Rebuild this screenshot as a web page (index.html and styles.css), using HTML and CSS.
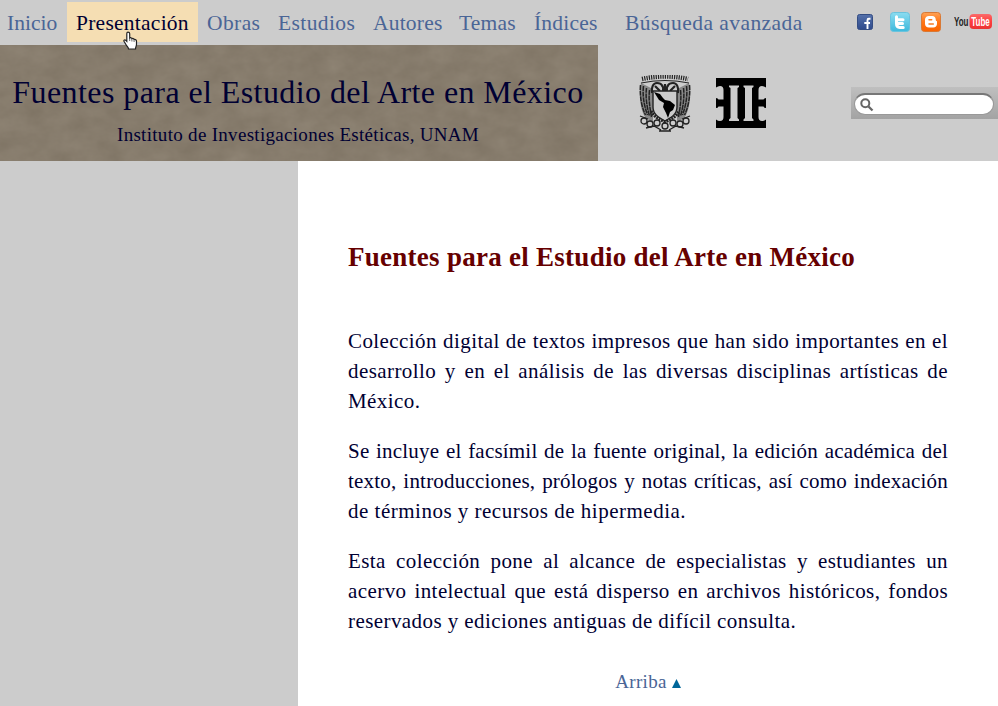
FILE: index.html
```html
<!DOCTYPE html>
<html lang="es">
<head>
<meta charset="utf-8">
<title>Fuentes para el Estudio del Arte en México</title>
<link rel="stylesheet" href="styles.css">
</head>
<body>
<header class="top">
  <div class="bar">
    <nav class="nav">
      <a class="n-ini"><span>Inicio</span></a>
      <a class="n-pre active"><span>Presentación</span>
        <svg class="cursor" width="16" height="20" viewBox="0 0 16 20"><path d="M5 1.200c1.300 0 1.700.8 1.700 1.600v4.200c.8-.6 1.900-.3 2.200.6.900-.4 1.900 0 2.200.9 1.200-.4 2.400.2 2.400 1.700v3.300c0 1.700-1 2.500-1 4.500H5.500c0-1.500-1.500-2.500-2.300-4L1 10.300c-.5-1.200.9-2 1.800-1l1 1V2.800C3.800 2 4.100 1.200 5 1.200z" fill="#fff" stroke="#222" stroke-width="1.200"/><path d="M6.700 7v3M8.900 8v2.500M11.100 8.500v2.500" stroke="#444" stroke-width=".8"/></svg>
      </a>
      <a class="n-obr"><span>Obras</span></a>
      <a class="n-est"><span>Estudios</span></a>
      <a class="n-aut"><span>Autores</span></a>
      <a class="n-tem"><span>Temas</span></a>
      <a class="n-ind"><span>Índices</span></a>
      <a class="n-bus"><span>Búsqueda avanzada</span></a>
    </nav>
    <div class="social">
      <svg class="fb" width="16" height="16" viewBox="0 0 16 16"><defs><linearGradient id="gf" x2="0" y2="1"><stop offset="0" stop-color="#5571aa"/><stop offset="1" stop-color="#2f4b8c"/></linearGradient></defs><rect x=".5" y=".5" width="15" height="15" rx="2" fill="url(#gf)" stroke="#344d83"/><path d="M13.500 4.800h-1.700c-1 0-1.300.5-1.300 1.400V15M7.300 9h5.700" stroke="#fff" stroke-width="1.900" fill="none"/></svg>
      <svg class="tw" width="20" height="20" viewBox="0 0 20 20"><defs><linearGradient id="gt" x2="0" y2="1"><stop offset="0" stop-color="#8bdcf0"/><stop offset="1" stop-color="#3db9dc"/></linearGradient></defs><rect x=".5" y=".5" width="19" height="19" rx="3" fill="url(#gt)" stroke="#69c3dd"/><path d="M6.500 4.800v7c0 2.400 1.200 3.600 3.300 3.600h3.400M6.500 7.700h6.500M7 11.500h5.500" stroke="#fff" stroke-width="3" stroke-linecap="round" stroke-linejoin="round" fill="none"/></svg>
      <svg class="bl" width="20" height="20" viewBox="0 0 20 20"><defs><linearGradient id="gb" x2="0" y2="1"><stop offset="0" stop-color="#ffa255"/><stop offset=".5" stop-color="#ff7415"/><stop offset="1" stop-color="#f96300"/></linearGradient></defs><rect x=".5" y=".5" width="19" height="19" rx="3" fill="url(#gb)" stroke="#d87935"/><path d="M8 4h3.300c2 0 3.400 1.300 3.400 3.300 0 1.300.4 1.700 1.300 2v2.500c0 2.300-1.500 3.700-3.700 3.700H8c-2.500 0-4-1.500-4-3.700V7.800C4 5.500 5.500 4 8 4z" fill="#fff"/><path d="M8 7.700h2.700M8 12h4.300" stroke="#f77a22" stroke-width="1.500" stroke-linecap="round"/></svg>
      <svg class="yt" width="38" height="16" viewBox="0 0 38 16"><defs><linearGradient id="gy" x2="0" y2="1"><stop offset="0" stop-color="#fa6b6b"/><stop offset=".5" stop-color="#ff3d3d"/><stop offset="1" stop-color="#e93434"/></linearGradient></defs><rect x="15.500" y="0" width="22.500" height="15" rx="4" fill="url(#gy)"/><g transform="scale(1 1.600)"><text x="0" y="7.700" class="yt-text yt-you">You</text><text x="17.300" y="7.700" class="yt-text yt-tube">Tube</text></g></svg>
    </div>
  </div>
  <div class="mast">
    <div class="banner">
      <svg class="texture" width="598" height="116"><filter id="paper" x="0" y="0" width="100%" height="100%" color-interpolation-filters="sRGB"><feTurbulence type="fractalNoise" baseFrequency=".04 .055" numOctaves="5" seed="8"/><feColorMatrix values=".07 0 0 0 .493  .07 0 0 0 .451  .07 0 0 0 .39  0 0 0 0 1"/></filter><rect width="598" height="116" filter="url(#paper)"/></svg>
      <h1><span>Fuentes para el Estudio del Arte en México</span></h1>
      <h2><span>Instituto de Investigaciones Estéticas, UNAM</span></h2>
    </div>
    <svg class="seal" width="52" height="58" viewBox="0 0 52 58" fill="none" stroke="#222">
      <path d="M2 8C0 20 1 34 6 42l8 6V14zM50 8c2 12 1 26-4 34l-8 6V14z" fill="#888" stroke="none"/>
      <path d="M3 4Q26-1 49 4" stroke-width="4.500" stroke-dasharray="1.200 1.100"/>
      <path d="M2 8Q26 3 50 8" stroke-width="1"/>
      <path d="M13 18c-1-5 1-10 5-10 5 0 7 4 6 8M39 18c1-5-1-10-5-10-5 0-7 4-6 8M16 11l5 5M36 11l-5 5M26 9v8M22 9l3 5M30 9l-3 5" stroke-width="2.200"/>
      <path d="M1.500 10c-1 10 1 22 5 30M4.500 11c-1 8 0 18 4 29M7.500 13c-1 8 0 18 3 28M10.500 15c-1 8 0 16 2 27M50.500 10c1 10-1 22-5 30M47.500 11c1 8 0 18-4 29M44.500 13c1 8 0 18-3 28M41.500 15c1 8 0 16-2 27" stroke-width="1.500" stroke-dasharray="5 .7"/>
      <path d="M14 16h24v16c0 7-5 10-12 14-7-4-12-7-12-14z" fill="#ccc" stroke-width="1.400"/>
      <path d="M15 17l6 2 3 4 2 2 5 1 5 4-2 5-3 2-2 6-2-5-3-6 1-4-5-3z" fill="#000" stroke="none"/>
      <path d="M12 36c3 6 8 8 14 11 6-3 11-5 14-11" stroke-width="3" stroke-dasharray="2 .8"/>
      <g stroke-width="1.300"><circle cx="5" cy="46" r="3"/><circle cx="11" cy="49" r="3"/><circle cx="18" cy="48" r="3"/><circle cx="26" cy="51" r="3"/><circle cx="34" cy="48" r="3"/><circle cx="41" cy="49" r="3"/><circle cx="47" cy="46" r="3"/><path d="M1 41l8 3M51 41l-8 3M7 53l8-2 7 4M45 53l-8-2-7 4M20 56h12"/></g>
    </svg>
    <svg class="iie" width="50" height="50" viewBox="0 0 50 50"><path d="M0 0h50v50H0z" fill="#000"/><path d="M0 9.500Q2 8 4 8q3.500 0 3.500 4v9.500H2.500Q2 20 0 20zM0 30q2 0 2.500-1.500h5V39q0 4-3.500 4-2 0-4-1.500zM50 9.500Q48 8 46 8q-3.500 0-3.500 4v9.500h5Q48 20 50 20zM50 30q-2 0-2.500-1.500h-5V39q0 4 3.500 4 2 0 4-1.500zM13 7.500h10v1.500l-1.500 1v30l1.500 1.500V43H13v-1.500l1.500-1.500V10L13 9zM27.500 7.500h10v1.500l-1.500 1v30l1.500 1.500V43h-10v-1.500l1.500-1.500V10l-1.500-1z" fill="#ccc"/></svg>
    <div class="search">
      <div class="field"><svg width="14" height="14" viewBox="0 0 14 14" fill="none" stroke="#666"><circle cx="5.300" cy="5.300" r="4" stroke-width="2"/><path d="M8.500 8.500l4 4" stroke-width="2.300"/></svg></div>
    </div>
  </div>
</header>
<main class="content">
  <h3><span>Fuentes para el Estudio del Arte en México</span></h3>
  <p>Colección digital de textos impresos que han sido importantes en el desarrollo y en el análisis de las diversas disciplinas artísticas de México.</p>
  <p class="tight">Se incluye el facsímil de la fuente original, la edición académica del texto, introducciones, prólogos y notas críticas, así como indexación <span class="last">de términos y recursos de hipermedia.</span></p>
  <p>Esta colección pone al alcance de especialistas y estudiantes un acervo intelectual que está disperso en archivos históricos, fondos reservados y ediciones antiguas de difícil consulta.</p>
  <a class="up"><span>Arriba</span><svg width="9" height="9" viewBox="0 0 9 9"><path d="M4.500 0L9 9H0z" fill="#069"/></svg></a>
</main>
</body>
</html>
```
FILE: styles.css
```css
* { box-sizing: border-box; }
body {
  margin: 0;
  height: 706px;
  overflow: hidden;
  background: #ccc;
  color: #003;
  font-family: "Liberation Serif", serif;
}
.bar { position: relative; z-index: 1; display: flex; height: 45px; }
.nav {
  display: grid;
  grid-template-columns: 66px 131px 70px 94px 85px 74px 90px 195px;
  column-gap: 1px;
  width: 856px;
  padding-top: 2px;
  font-size: 21.5px;
  line-height: 42px;
  letter-spacing: .2px;
  color: #4a6596;
  white-space: nowrap;
}
.nav a { position: relative; height: 40px; padding-left: 8px; }
.nav .n-ini { padding-left: 7px; letter-spacing: 0; }
.nav .n-pre { padding-left: 9px; letter-spacing: .25px; }
.nav .n-obr, .nav .n-est { letter-spacing: .4px; }
.nav .n-bus { letter-spacing: .45px; }
.nav .active { background: #f5deb3; color: #003; }
.cursor { position: absolute; left: 56px; top: 29px; }
.social { display: flex; padding-top: 12px; }
.fb { margin: 2px 17px 0 1px; }
.tw { margin-right: 11px; }
.bl { margin-right: 13px; }
.yt { margin-top: 2px; }
.yt-text { font: bold 8px "Liberation Sans", sans-serif; }
.yt-you { fill: #222; }
.yt-tube { fill: #fff; }
.mast { display: flex; height: 116px; }
.banner { position: relative; width: 598px; padding-right: 2px; overflow: hidden; background: #857b6b; text-align: center; }
.texture { position: absolute; left: 0; top: 0; }
.banner h1, .banner h2 { position: relative; margin: 0; font-weight: normal; white-space: nowrap; }
.banner h1 { padding-top: 26px; font-size: 32px; line-height: 42px; letter-spacing: .42px; }
.banner h2 { padding-top: 10px; font-size: 19px; line-height: 24px; letter-spacing: .3px; }
.seal { margin: 30px 25px 0 41px; }
.iie { margin: 33px 85px 0 0; }
.search { width: 147px; height: 32px; margin-top: 42px; padding: 6px 4px 0 3px; background: linear-gradient(#bfbfbf, #a3a3a3); }
.field { height: 22px; padding: 4px 0 0 5px; border-radius: 11px; background: #fff; border: 1px solid #999; border-top: 2px solid #777; }
.field svg { display: block; margin-top: -1px; }
.content { width: 700px; height: 545px; margin-left: 298px; padding: 76px 50px 0; background: #fff; }
.content h3 { margin: 0 0 49px; color: #600; font-size: 27px; line-height: 40px; letter-spacing: .27px; white-space: nowrap; }
.content p { margin: 0 0 20px; font-size: 21px; line-height: 30px; letter-spacing: .42px; text-align: justify; }
.content .tight { letter-spacing: .2px; }
.content .last { letter-spacing: .5px; }
.up { display: flex; justify-content: center; align-items: center; gap: 5px; padding-top: 15px; font-size: 19px; line-height: 22px; letter-spacing: .35px; color: #4a6596; }
.up svg { margin-top: 2px; }
```
